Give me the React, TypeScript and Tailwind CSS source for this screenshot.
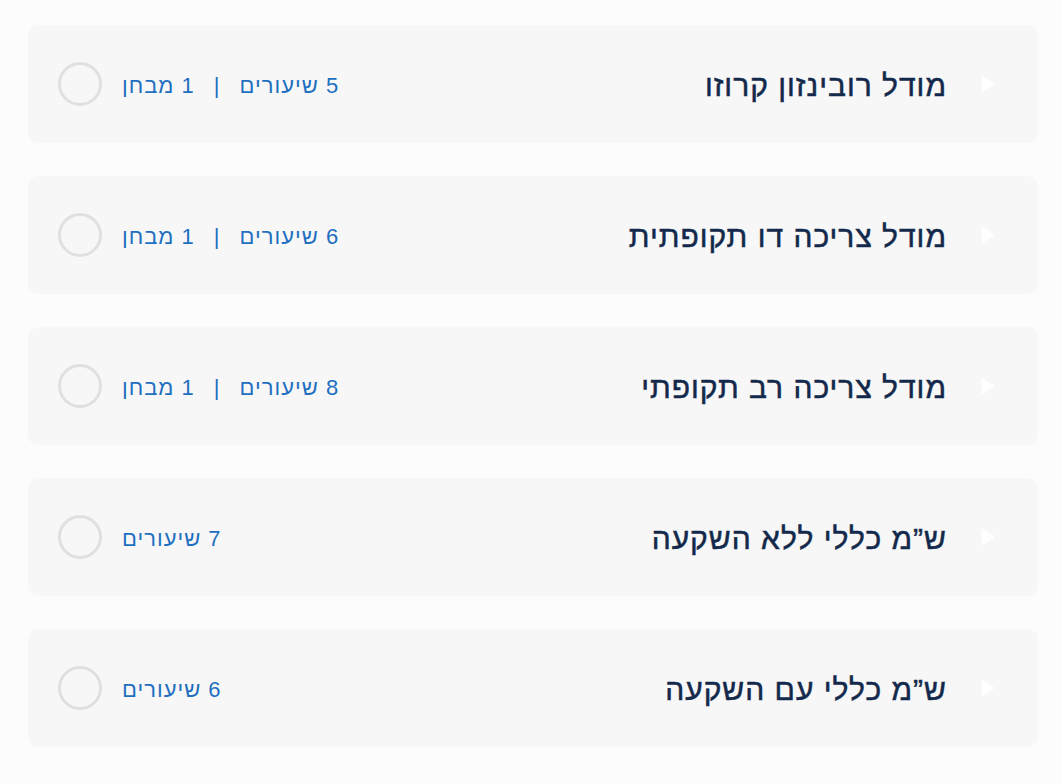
const modules = [
  { title: "מודל רובינזון קרוזו", lessons: 5, quizzes: 1 },
  { title: "מודל צריכה דו תקופתית", lessons: 6, quizzes: 1 },
  { title: "מודל צריכה רב תקופתי", lessons: 8, quizzes: 1 },
  { title: "ש”מ כללי ללא השקעה", lessons: 7, quizzes: 0 },
  { title: "ש”מ כללי עם השקעה", lessons: 6, quizzes: 0 },
];

const ModuleRow = ({ title, lessons, quizzes }: { title: string; lessons: number; quizzes: number }) => {
  return (
    <div className="flex h-[118px] items-center justify-between rounded-[10px] bg-[#f7f7f7] pr-[43px] pl-[30px]">
      <div className="flex items-center gap-[34px]">
        {/* white play arrow */}
        <svg width="14" height="18" viewBox="0 0 14 18" className="shrink-0">
          <path d="M1 1 L13 9 L1 17 Z" fill="#ffffff" stroke="#ffffff" strokeWidth="1" strokeLinejoin="round" />
        </svg>
        <h3 className="mt-[3px] text-[30px] leading-none tracking-[1px] text-[#13294b] [-webkit-text-stroke:0.5px_#13294b]">
          {title}
        </h3>
      </div>
      <div className="flex items-center gap-[20px]">
        <div className="mt-[3px] flex items-center gap-[19px] text-[22px] leading-none tracking-[1px] text-[#1e6fc0]">
          <span>{lessons} שיעורים</span>
          {quizzes > 0 && (
            <>
              <span>|</span>
              <span>{quizzes} מבחן</span>
            </>
          )}
        </div>
        <div className="h-[44px] w-[44px] shrink-0 rounded-full border-[3px] border-[#e0e0e0]" />
      </div>
    </div>
  );
};

const App = () => {
  return (
    <div
      dir="rtl"
      className="min-h-screen bg-[#fcfcfc] pt-[25px] pr-[24px] pl-[28px]"
      style={{ fontFamily: '"Liberation Sans", "DejaVu Sans", sans-serif' }}
    >
      <div className="flex flex-col gap-[33px]">
        {modules.map((m) => (
          <ModuleRow key={m.title} {...m} />
        ))}
      </div>
    </div>
  );
};

export default App;
